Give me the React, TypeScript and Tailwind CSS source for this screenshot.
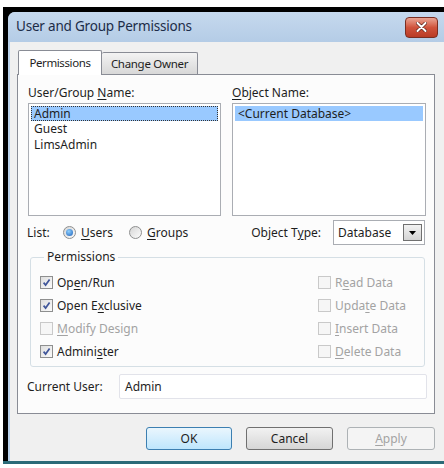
import React from "react";

type BoxProps = { checked?: boolean; disabled?: boolean };

// small Win7-style check box
function CheckBox({ checked, disabled }: BoxProps) {
  return (
    <span
      className={`flex h-[13px] w-[13px] shrink-0 items-center justify-center border ${
        disabled
          ? "border-[#c9c9c9] bg-[#f6f6f6]"
          : "border-[#8e8f8f] bg-gradient-to-br from-[#dedede] to-[#fbfbfb]"
      }`}
    >
      {checked && (
        <svg width="9" height="9" viewBox="0 0 9 9">
          <path d="M1.6 4.6 L3.6 7 L7.6 1.4" stroke="#40569a" strokeWidth="1.7" fill="none" />
        </svg>
      )}
    </span>
  );
}

function Radio({ checked }: { checked?: boolean }) {
  return (
    <span className="flex h-[13px] w-[13px] shrink-0 items-center justify-center rounded-full border border-[#8e8f8f] bg-gradient-to-br from-[#d6d6d6] to-[#fcfcfc]">
      {checked && (
        <span className="h-[7px] w-[7px] rounded-full bg-[radial-gradient(circle_at_40%_35%,#8fd1ff,#1d5fb8)]" />
      )}
    </span>
  );
}

function Perm({ label, u, checked, disabled }: { label: string; u: number; checked?: boolean; disabled?: boolean }) {
  return (
    <div className="flex h-[23px] items-center gap-[4px] whitespace-nowrap">
      <CheckBox checked={checked} disabled={disabled} />
      <span className={disabled ? "text-[#a3a3a3]" : "text-[#1e1e1e]"}>
        {label.slice(0, u)}
        <span className="underline underline-offset-2">{label[u]}</span>
        {label.slice(u + 1)}
      </span>
    </div>
  );
}

export default function App() {
  return (
    <div className="h-[468px] w-[444px] overflow-hidden bg-white pt-[7px] font-['Noto_Sans',sans-serif] text-[12px] leading-none text-[#1e1e1e]">
      <div className="ml-[3px] h-[454px] bg-black pl-[5px] pt-[5px]">
        <div className="flex h-[449px] flex-col overflow-hidden rounded-tl-[7px] bg-[#b9d1ea]">
          {/* title bar */}
          <div className="flex h-[30px] shrink-0 items-center justify-between bg-gradient-to-b from-[#c6d9ee] to-[#b4cce6] pl-[8px] pr-[6px]">
            <span className="text-[13.5px] tracking-[-0.2px] text-[#1c2c48]">User and Group Permissions</span>
            <div className="flex h-[21px] w-[33px] items-center justify-center rounded-[4px] border border-[#7a2e22] bg-gradient-to-b from-[#e9a493] via-[#d0533c] to-[#b93b25]">
              <svg width="11" height="10" viewBox="0 0 11 10">
                <path d="M1.5 1 L9.5 9 M9.5 1 L1.5 9" stroke="#5a2018" strokeWidth="3.4" strokeLinecap="round" />
                <path d="M1.5 1 L9.5 9 M9.5 1 L1.5 9" stroke="#ffffff" strokeWidth="2" strokeLinecap="round" />
              </svg>
            </div>
          </div>

          {/* dialog body */}
          <div className="ml-[2px] flex flex-1 flex-col bg-[#f0f0f0] pl-[7px] pr-[9px] pt-[8px]">
            <div className="ml-[1px] flex items-end">
              <div className="relative z-10 -mb-px flex h-[25px] w-[84px] items-center justify-center rounded-t-[2px] border border-b-0 border-[#898c95] bg-white text-[11.5px] tracking-[-0.4px]">
                Permissions
              </div>
              <div className="flex h-[22px] w-[96px] items-center justify-center rounded-t-[2px] border border-b-0 border-l-0 border-[#898c95] bg-gradient-to-b from-[#f3f3f3] to-[#d8d8d8] text-[11.5px] tracking-[-0.3px]">
                Change Owner
              </div>
            </div>

            {/* tab page */}
            <div className="flex flex-col border border-[#898c95] bg-[#fcfcfc] pb-[14px] pl-[10px] pr-[7px] pt-[10px]">
              <div className="flex gap-[11px]">
                <div className="flex w-[193px] flex-col">
                  <div className="h-[16px] leading-[16px]">
                    User/Group <span className="underline underline-offset-2">N</span>ame:
                  </div>
                  <div className="mt-[2px] h-[113px] border border-[#aaadb3] bg-white p-[2px]">
                    <div className="flex h-[15px] items-center border border-dotted border-[#333] bg-[#99c9ff] pl-[2px]">Admin</div>
                    <div className="flex h-[16px] items-center pl-[3px]">Guest</div>
                    <div className="flex h-[16px] items-center pl-[3px]">LimsAdmin</div>
                  </div>
                </div>
                <div className="flex w-[194px] flex-col">
                  <div className="h-[16px] leading-[16px]">
                    <span className="underline underline-offset-2">O</span>bject Name:
                  </div>
                  <div className="mt-[2px] h-[113px] border border-[#aaadb3] bg-white p-[2px]">
                    <div className="flex h-[15px] items-center bg-[#99c9ff] pl-[3px]">&lt;Current Database&gt;</div>
                  </div>
                </div>
              </div>

              <div className="-ml-px mt-[4px] flex h-[25px] items-center">
                <span className="w-[36px]">List:</span>
                <Radio checked />
                <span className="ml-[5px] w-[48px]">
                  <span className="underline underline-offset-2">U</span>sers
                </span>
                <Radio />
                <span className="ml-[5px]">
                  <span className="underline underline-offset-2">G</span>roups
                </span>
                <span className="ml-auto mr-[12px]">
                  Object T<span className="underline underline-offset-2">y</span>pe:
                </span>
                <div className="mr-[2px] flex h-[25px] w-[92px] items-center justify-between border border-[#aaadb3] bg-white pl-[4px] pr-[2px]">
                  <span>Database</span>
                  <div className="flex h-[17px] w-[19px] items-center justify-center border border-[#707070] bg-gradient-to-b from-[#f2f2f2] to-[#d4d4d4]">
                    <svg width="7" height="4" viewBox="0 0 7 4">
                      <path d="M0 0 H7 L3.5 4 Z" fill="#000" />
                    </svg>
                  </div>
                </div>
              </div>

              <fieldset className="ml-[2px] mr-[2px] mt-[5px] rounded-[3px] border border-[#d5dfe5] pb-[3px] pl-[9px] pr-[9px]">
                <legend className="ml-[4px] px-[3px] leading-[14px]">Permissions</legend>
                <div className="mt-[7px] flex justify-between">
                  <div className="flex flex-col">
                    <Perm label="Open/Run" u={2} checked />
                    <Perm label="Open Exclusive" u={6} checked />
                    <Perm label="Modify Design" u={0} disabled />
                    <Perm label="Administer" u={6} checked />
                  </div>
                  <div className="mr-[6px] flex w-[91px] flex-col">
                    <Perm label="Read Data" u={1} disabled />
                    <Perm label="Update Data" u={4} disabled />
                    <Perm label="Insert Data" u={0} disabled />
                    <Perm label="Delete Data" u={0} disabled />
                  </div>
                </div>
              </fieldset>

              <div className="-ml-px mt-[7px] flex h-[25px] items-center">
                <span className="w-[92px]">Current User:</span>
                <div className="flex h-[25px] flex-1 items-center rounded-[2px] border border-[#e2e3ea] bg-white pl-[5px]">Admin</div>
              </div>
            </div>

            {/* buttons */}
            <div className="mt-[13px] flex justify-end gap-[14px]">
              <div className="flex h-[23px] w-[86px] items-center justify-center rounded-[3px] border border-[#3c7fb1] bg-gradient-to-b from-[#eaf6fd] to-[#bee6fd]">OK</div>
              <div className="flex h-[23px] w-[87px] items-center justify-center rounded-[3px] border border-[#707070] bg-gradient-to-b from-[#f2f2f2] to-[#d6d6d6]">Cancel</div>
              <div className="flex h-[23px] w-[88px] items-center justify-center rounded-[3px] border border-[#adb2b5] bg-[#f4f4f4] text-[#a3a3a3]">
                <span className="underline underline-offset-2">A</span>pply
              </div>
            </div>
          </div>
        </div>
      </div>
      <div className="ml-[3px] h-[3px] bg-[#2b6b78]" />
    </div>
  );
}
